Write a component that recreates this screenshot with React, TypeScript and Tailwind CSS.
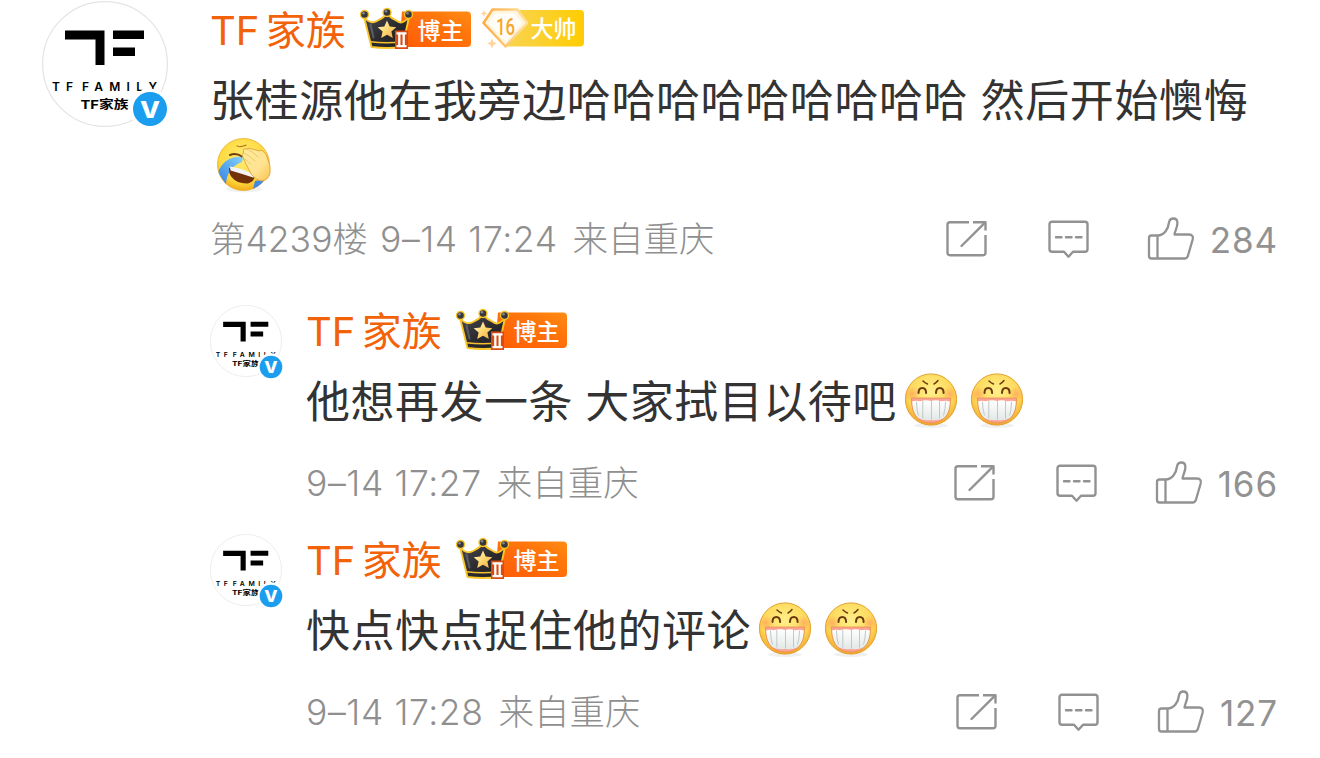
import type { ReactNode } from "react"

const replies = [
  {
    id: 1,
    text: "他想再发一条 大家拭目以待吧",
    time: "9–14 17:27",
    likes: "166",
  },
  {
    id: 2,
    text: "快点快点捉住他的评论",
    time: "9–14 17:28",
    likes: "127",
  },
]

function Avatar({ small = false }: { small?: boolean }) {
  return (
    <div className={`relative shrink-0 ${small ? "size-[72px]" : "size-[126px]"}`}>
      <svg viewBox="0 0 126 126" className="size-full">
        <circle cx="63" cy="63" r="62.4" fill="#fff" stroke="#e4e4e4" strokeWidth="1.2" />
        <path d="M23 29.5h39.5v34.5h-9V38.5H23zM71 29.5h31v8.5H71zM71 46.500h22v8.500H71z" fill="#000" />
        <text x="10" y="90.300" fontSize="12" fontWeight="600" fontFamily="Inter, sans-serif">
          <tspan textLength="21">TF</tspan>
          <tspan x="40" textLength="75">FAMILY</tspan>
        </text>
        <text x="38.500" y="107.500" fontSize="12" fontWeight="700" textLength="48" lengthAdjust="spacingAndGlyphs" fontFamily="Inter, 'Noto Sans CJK SC', sans-serif">TF家族</text>
      </svg>
      <svg
        viewBox="0 0 42 42"
        className={`absolute ${small ? "left-[47px] top-[48px] size-[28px]" : "left-[87px] top-[87px] size-[42px]"}`}
      >
        <circle cx="21" cy="21" r="20.5" fill="#fff" />
        <circle cx="21" cy="21" r="17" fill="#1b9df0" />
        <text x="11" y="29.500" fontSize="23" fontWeight="800" fill="#fff" textLength="20" lengthAdjust="spacingAndGlyphs" fontFamily="Inter, sans-serif">V</text>
      </svg>
    </div>
  )
}

function BloggerBadge({ id }: { id: string }) {
  return (
    <svg width="117" height="58" viewBox="0 0 117 58" className="shrink-0">
      <defs>
        <linearGradient id={`${id}-tag`} x1="0" x2="1" y1="1" y2="0">
          <stop offset="0" stopColor="#ff5a06" />
          <stop offset="0.7" stopColor="#ff780c" />
          <stop offset="1" stopColor="#ff8c14" />
        </linearGradient>
        <linearGradient id={`${id}-crown`} x1="0" x2="1" y1="0" y2="1">
          <stop offset="0" stopColor="#4a4b52" />
          <stop offset="0.5" stopColor="#2b2b30" />
          <stop offset="1" stopColor="#1d1d20" />
        </linearGradient>
        <linearGradient id={`${id}-star`} x1="0" x2="1" y1="0" y2="1">
          <stop offset="0" stopColor="#fff6c8" />
          <stop offset="0.5" stopColor="#ffd873" />
          <stop offset="1" stopColor="#f0a53c" />
        </linearGradient>
      </defs>
      <path d="M47 11.500h65a4 4 0 0 1 4 4v27.500a4 4 0 0 1-4 4H44z" fill={`url(#${id}-tag)`} />
      <path
        d="M9 17C13 22 17 24 22 21C26 19 30 16 32 14C34 16 38 19 42 21C46 24 50 22 54 17L47.500 47Q32 49 16.500 47Z"
        fill={`url(#${id}-crown)`}
        stroke="#f9c527"
        strokeWidth="1.900"
        strokeLinejoin="round"
      />
      <path d="M15.500 41.800q16 2 32 0" fill="none" stroke="#f6c02c" strokeWidth="1.600" />
      <path d="M15.500 24.500l3 13" stroke="#777981" strokeWidth="2" strokeLinecap="round" opacity=".6" />
      {[[9.500, 14.500], [32, 12.500], [53.500, 14.500]].map(([x, y]) => (
        <g key={x}>
          <circle cx={x} cy={y} r="4" fill="#37383d" stroke="#f9c527" strokeWidth="1.400" />
          <circle cx={x - 1} cy={y - 1.300} r="1.300" fill="#85868c" />
        </g>
      ))}
      <path
        d="M32 20.500l2.700 6 6.600.7-4.900 4.400 1.400 6.500-5.800-3.300-5.800 3.300 1.400-6.500-4.900-4.400 6.600-.7z"
        fill={`url(#${id}-star)`}
      />
      <path d="M40 30.500h13V49H40z" fill="#d94b12" />
      <path d="M41.500 33.300h10M41.500 46.200h10M44.300 33.500V46M48.700 33.500V46" stroke="#fff" strokeWidth="2.300" />
      <text x="62.500" y="38.500" fontSize="23" fontWeight="500" fill="#fff" fontFamily="'Noto Sans CJK SC', sans-serif">博主</text>
    </svg>
  )
}

function LevelBadge() {
  return (
    <svg width="106" height="58" viewBox="0 0 106 58" className="shrink-0">
      <defs>
        <linearGradient id="level-tag" x1="0" x2="1">
          <stop offset="0" stopColor="#f8d455" />
          <stop offset="1" stopColor="#ffcc02" />
        </linearGradient>
        <linearGradient id="level-gem" x1="0" x2="1">
          <stop offset="0" stopColor="#ffaa46" />
          <stop offset="1" stopColor="#ffe3a0" />
        </linearGradient>
      </defs>
      <path d="M24 10h76a4 4 0 0 1 4 4V42.500a4 4 0 0 1-4 4H24z" fill="url(#level-tag)" />
      <path d="M12.500 9.500h25L47 23 25.500 46.500 3.500 23z" fill="#fff4dc" stroke="url(#level-gem)" strokeWidth="2.500" strokeLinejoin="round" />
      <path d="M15.500 13.500h19l7.500 9.500L25.500 41.500 8.500 23z" fill="#fffdf8" />
      <path d="M4 10l1 2.500L7.500 13.500 5 14.500 4 17l-1-2.500L.5 13.500 3 12.500zM12 38.500l1.500 3.500 3.500 1.500-3.500 1.500L12 48.500 10.500 45 7 43.500l3.500-1.500z" fill="#ffd49a" />
      <text x="16" y="34.500" fontSize="24.500" fontWeight="500" fill="#f7a62a" textLength="19" lengthAdjust="spacingAndGlyphs" fontFamily="Roboto, sans-serif">16</text>
      <text x="50.500" y="37" fontSize="23" fontWeight="500" fill="#fff" fontFamily="'Noto Sans CJK SC', sans-serif">大帅</text>
    </svg>
  )
}

function FacepalmEmoji() {
  return (
    <svg width="66" height="64" viewBox="0 0 66 64">
      <defs>
        <radialGradient id="palm-face" cx=".5" cy=".38" r=".62">
          <stop offset="0" stopColor="#ffec76" />
          <stop offset="0.75" stopColor="#ffd93b" />
          <stop offset="1" stopColor="#f2ac1d" />
        </radialGradient>
        <linearGradient id="palm-tear" x1="1" x2="0" y1="0" y2="1">
          <stop offset="0" stopColor="#86d3fb" />
          <stop offset="1" stopColor="#327ee4" />
        </linearGradient>
        <linearGradient id="palm-hand" x1="0" x2="1" y1="0" y2="1">
          <stop offset="0" stopColor="#ffec9c" />
          <stop offset="0.6" stopColor="#ffe391" />
          <stop offset="1" stopColor="#fbc24c" />
        </linearGradient>
        <clipPath id="palm-clip">
          <circle cx="32.500" cy="31.500" r="26" />
        </clipPath>
      </defs>
      <ellipse cx="33" cy="56" rx="18" ry="3.500" fill="#000" opacity=".05" />
      <circle cx="32.500" cy="31.500" r="26" fill="url(#palm-face)" stroke="#e9ac28" strokeWidth=".8" />
      <g clipPath="url(#palm-clip)">
        <path d="M32 24C20 22 11 29 7 39L15 52C15 42 21 32 31 29z" fill="url(#palm-tear)" />
        <path d="M44 48l11-2-5 13-9 1z" fill="#3f88e8" />
      </g>
      <path d="M18 35Q31 37 43.500 43Q43.500 48.500 37 50.500Q26 51 20.500 44Q17.500 40 18 35z" fill="#743006" />
      <path d="M19 33.500Q32 35 44 42.500Q44 44.500 42 44.500Q30 40.500 19.500 37.500z" fill="#f4f4f8" />
      <path d="M19 22q6-2.500 12 1.500" stroke="#733d0d" strokeWidth="2" fill="none" strokeLinecap="round" />
      <path d="M26 13q4 1.500 9-.8" stroke="#b78026" strokeWidth="1.300" fill="none" strokeLinecap="round" />
      <path
        d="M32.500 19Q31.500 15 36 16Q38 14.500 41 16L49 18Q49 16 52 18Q56 21 57 27Q60 32 59 40Q57 48 50 48Q45 47 40 41Q37 35 33 27Q30 22 32.500 19z"
        fill="url(#palm-hand)"
        stroke="#dfa037"
        strokeWidth=".9"
      />
      <path d="M36 16q6 2.500 11 8M33 20q6 2.500 11 8M33 25.500q4 2.500 7 6" stroke="#e8b860" strokeWidth=".8" fill="none" strokeLinecap="round" />
    </svg>
  )
}

function GrinEmoji({ id }: { id: string }) {
  return (
    <svg width="66" height="64" viewBox="0 0 66 64" className="shrink-0">
      <defs>
        <radialGradient id={`${id}-face`} cx=".5" cy=".35" r=".65">
          <stop offset="0" stopColor="#ffef8a" />
          <stop offset="0.7" stopColor="#fdd755" />
          <stop offset="1" stopColor="#f0a52c" />
        </radialGradient>
        <radialGradient id={`${id}-blush`}>
          <stop offset="0" stopColor="#ff9b5c" stopOpacity=".65" />
          <stop offset="1" stopColor="#ff9b5c" stopOpacity="0" />
        </radialGradient>
        <linearGradient id={`${id}-teeth`} x1="0" x2="0" y1="0" y2="1">
          <stop offset="0" stopColor="#fff" />
          <stop offset="1" stopColor="#e2e8e6" />
        </linearGradient>
        <clipPath id={`${id}-mouth`}>
          <path d="M13.500 28h39Q53 42 46 48.500Q41 53 33 53Q25 53 20 48.500Q13 42 13.500 28z" />
        </clipPath>
      </defs>
      <ellipse cx="33" cy="55.500" rx="17" ry="2.500" fill="#000" opacity=".06" />
      <circle cx="33" cy="29.500" r="25.600" fill={`url(#${id}-face)`} stroke="#e3a12b" strokeWidth="1" />
      <circle cx="14" cy="24" r="8" fill={`url(#${id}-blush)`} />
      <circle cx="52" cy="24" r="8" fill={`url(#${id}-blush)`} />
      <g clipPath={`url(#${id}-mouth)`}>
        <path d="M12 27h42v27H12z" fill="#fba392" />
        <path d="M14 31.500Q18 30 22 31.300Q28 29.500 33 31Q38 29.500 43 31.300Q48 30 52 31.500Q51.500 43 46.500 48Q40 51 33 50Q26 51 20 48Q14.500 43 14 31.500z" fill={`url(#${id}-teeth)`} />
        <path d="M18.500 31.500q0 8 2 14M24.800 31v17.500M33.500 31v18.500M41.500 31v17.500M47.500 31.500q0 8-2 14" stroke="#bfc8c6" strokeWidth="1" fill="none" />
      </g>
      <path d="M13.500 28h39Q53 42 46 48.500Q41 53 33 53Q25 53 20 48.500Q13 42 13.500 28z" fill="none" stroke="#e58a4a" strokeWidth=".7" />
      <path d="M20.500 23q0-5 3.800-5t3.800 5M38 23q0-5 3.800-5t3.800 5" stroke="#6b3a0e" strokeWidth="2" fill="none" strokeLinecap="round" />
      <path d="M25 11q2 2 4.500 3M40 10.500q-2 2.500-4 3.500" stroke="#6b3a0e" strokeWidth="1.500" fill="none" strokeLinecap="round" />
    </svg>
  )
}

function Actions({ likes }: { likes: string }) {
  return (
    <div className="flex items-center text-[#929292]">
      <svg width="41" height="44" viewBox="0 0 41 44" fill="none" stroke="currentColor" strokeWidth="2.4" strokeLinejoin="round">
        <path d="M23 5.200H4A2.500 2.500 0 0 0 1.500 7.700v28A2.500 2.500 0 0 0 4 38.200h33a2.500 2.500 0 0 0 2.500-2.500V18" />
        <path d="M27 5.200h12.500V13.500" />
        <path d="M38.500 6.200L15.500 29" strokeLinecap="round" />
      </svg>
      <svg width="41" height="44" viewBox="0 0 41 44" fill="none" stroke="currentColor" strokeWidth="2.4" strokeLinejoin="round" className="ml-[61px]">
        <path d="M4 4.700h33a2.500 2.500 0 0 1 2.500 2.500v25a2.500 2.500 0 0 1-2.500 2.500H25l-4.500 5L16 34.700H4a2.500 2.500 0 0 1-2.500-2.500V7.200A2.500 2.500 0 0 1 4 4.700z" />
        <path d="M8 20.200h5.500M18 20.200h5.500M28 20.200h5.500" strokeLinecap="round" />
      </svg>
      <svg width="48" height="44" viewBox="0 0 48 44" fill="none" stroke="currentColor" strokeWidth="2.300" strokeLinejoin="round" className="ml-[58px]">
        <path d="M10.500 18.500H4.500a2.500 2.500 0 0 0-2.500 2.500v18a2.500 2.500 0 0 0 2.500 2.500h33.200q2.300 0 3.100-2.300l4.800-16.400q1.300-5.300-3.700-5.300H27.500c.2-3.500 3.300-7.500 2.900-12C30 .1 22.900.2 22 5.500C21.300 11.500 17.500 18.500 10.500 18.500v23" />
      </svg>
      <span className="-mr-[2px] ml-[15px] pt-[2px] font-[Inter] text-[35px] leading-[44px] font-normal tracking-[0.9px]">{likes}</span>
    </div>
  )
}

function Name({ children }: { children: ReactNode }) {
  return (
    <div className="flex h-[58px] items-center">
      <span className="w-[145px] whitespace-nowrap pt-[3px] font-[Inter,'Noto_Sans_CJK_SC',sans-serif] text-[40px] leading-[58px] [word-spacing:-5px] text-[#f26208]">TF 家族</span>
      {children}
    </div>
  )
}

function Meta({ floor, time, likes }: { floor?: string; time: string; likes: string }) {
  return (
    <div className="flex h-[44px] items-center justify-between font-[Inter,'Noto_Sans_CJK_SC',sans-serif] text-[35.5px] leading-[44px] font-light text-[#8f8f8f]">
      <div className="flex whitespace-nowrap pt-[2px]">
        {floor && <span className="mr-[12px]">{floor}</span>}
        <span className="tracking-[0.6px]">{time}</span>
        <span className="ml-[15px]">来自重庆</span>
      </div>
      <Actions likes={likes} />
    </div>
  )
}

export default function App() {
  return (
    <main className="h-[758px] w-[1320px] overflow-hidden bg-white pr-[44px] font-['Noto_Sans_CJK_SC',sans-serif] text-[44px] leading-[64px] text-[#333]">
      <article className="flex pl-[42px]">
        <div className="pt-px">
          <Avatar />
        </div>
        <div className="ml-[42px] flex-1">
          <Name>
            <div className="flex gap-[8px]">
              <BloggerBadge id="main" />
              <LevelBadge />
            </div>
          </Name>
          <p className="mt-[8px] whitespace-nowrap tracking-[0.6px] [word-spacing:2px]">张桂源他在我旁边哈哈哈哈哈哈哈哈哈 然后开始懊悔</p>
          <div className="pl-px pt-[3px]">
            <FacepalmEmoji />
          </div>
          <div className="mt-[20px]">
            <Meta floor="第4239楼" time="9–14 17:24" likes="284" />
          </div>
        </div>
      </article>

      <section className="mt-[40px] flex flex-col gap-[28px] pl-[210px]">
        {replies.map((reply) => (
          <article key={reply.id} className="flex h-[201px]">
            <div className="pt-[4px]">
              <Avatar small />
            </div>
            <div className="ml-[24px] flex-1">
              <Name>
                <BloggerBadge id={`reply-${reply.id}`} />
              </Name>
              <div className="mt-[8px] flex tracking-[0.5px] [word-spacing:2px]">
                <p className="mr-px whitespace-nowrap">{reply.text}</p>
                <div className="flex pt-[3px]">
                  <GrinEmoji id={`a-${reply.id}`} />
                  <GrinEmoji id={`b-${reply.id}`} />
                </div>
              </div>
              <div className="mt-[27px]">
                <Meta time={reply.time} likes={reply.likes} />
              </div>
            </div>
          </article>
        ))}
      </section>
    </main>
  )
}
